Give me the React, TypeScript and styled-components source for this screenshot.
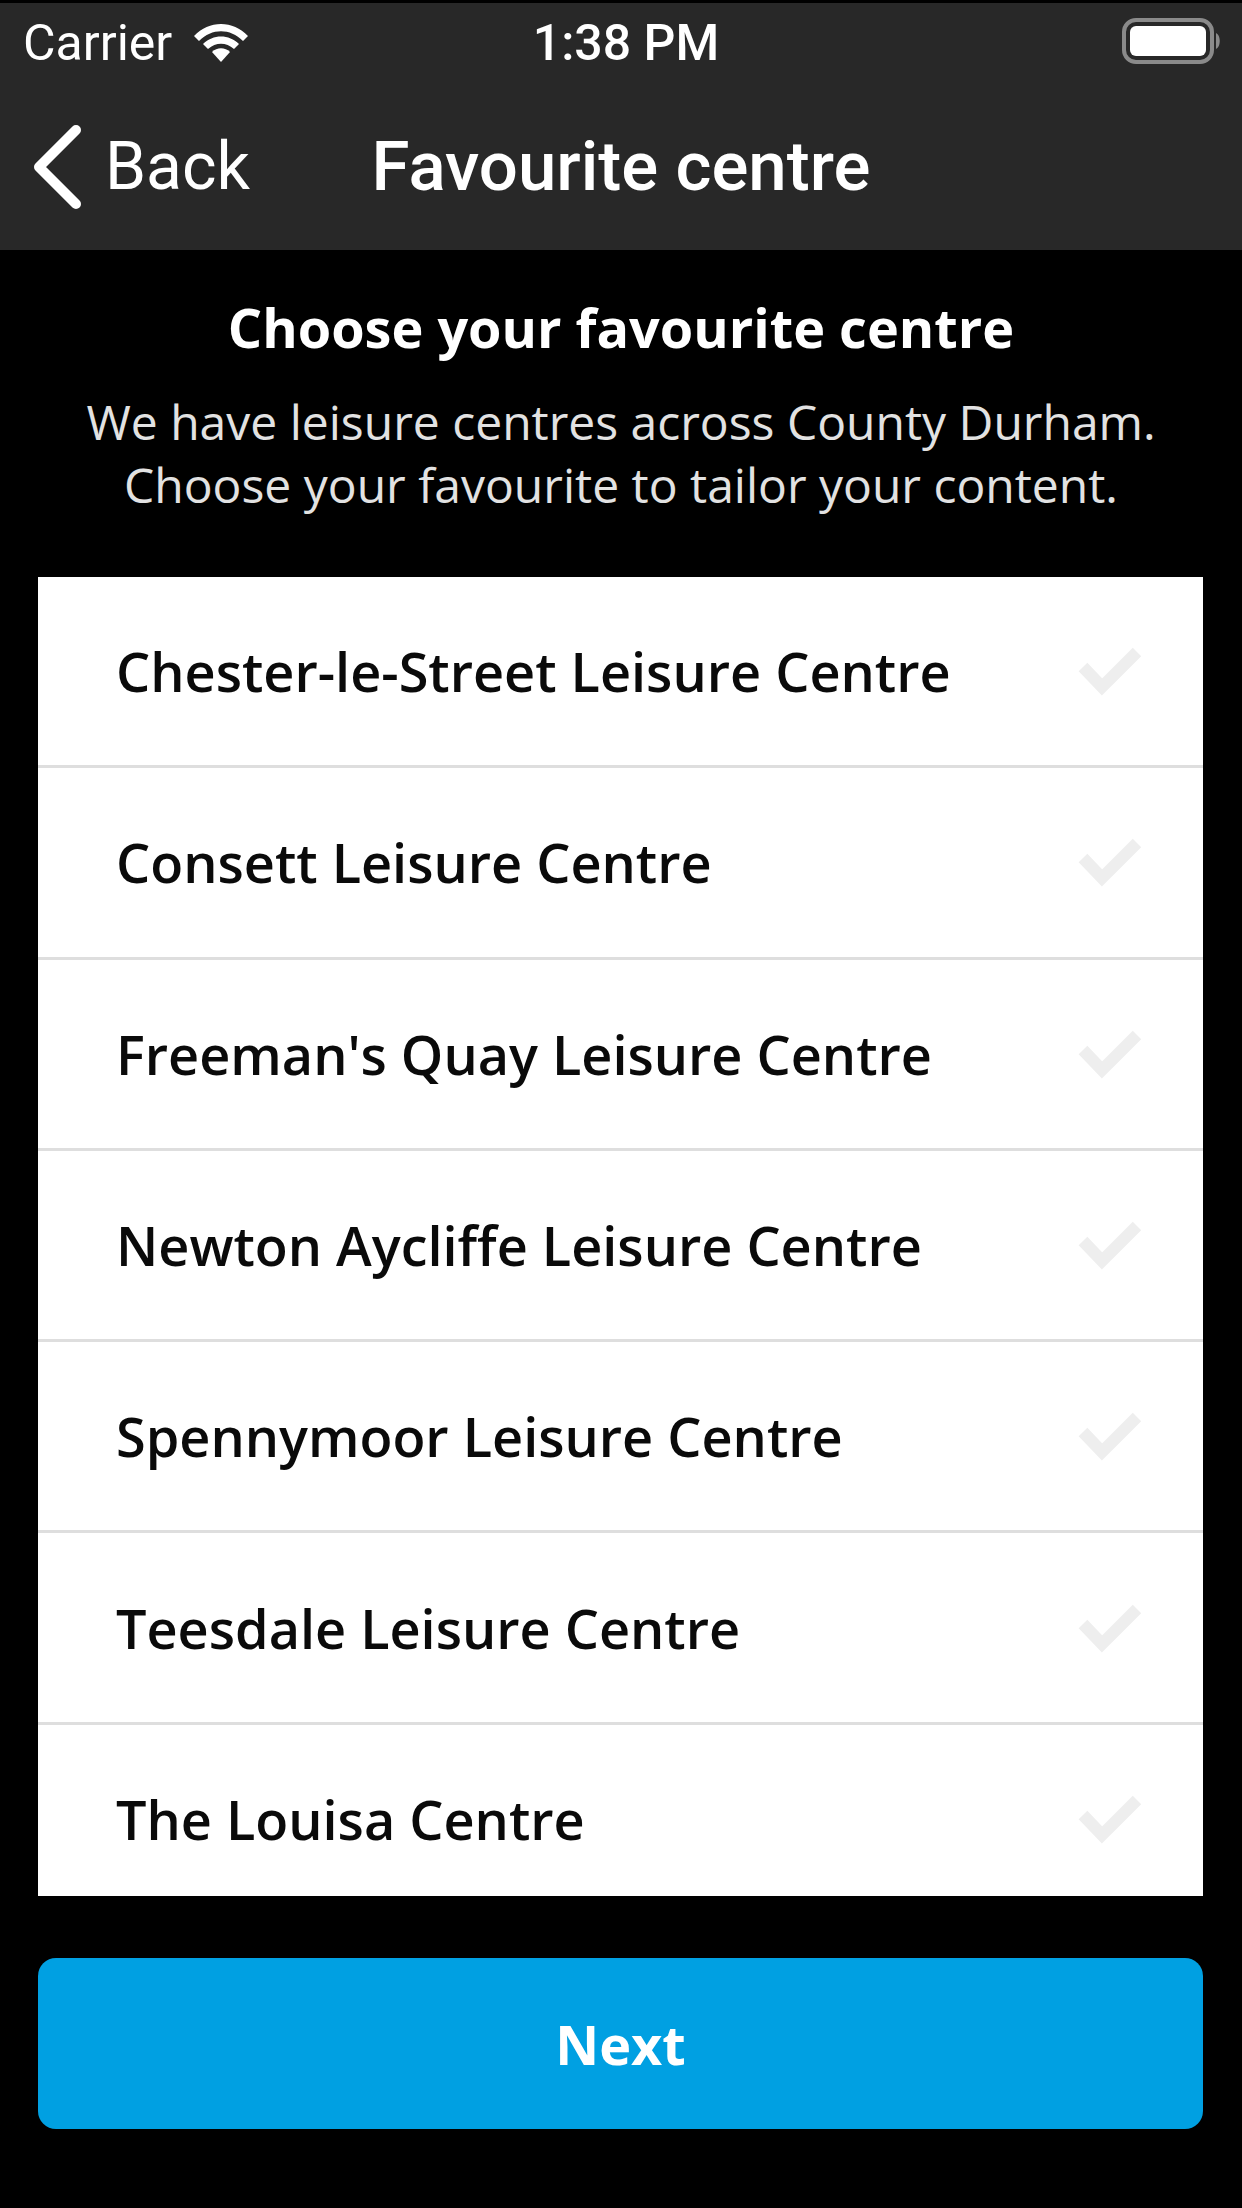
import React from "react";
import styled, { createGlobalStyle } from "styled-components";

const Global = createGlobalStyle`
  html, body { margin: 0; padding: 0; background: #000; }
  * { box-sizing: border-box; }
`;

const Page = styled.div`
  width: 1242px;
  height: 2208px;
  background: #000;
  padding-top: 3px;
  overflow: hidden;
  font-family: "Open Sans", sans-serif;
`;

const Header = styled.header`
  height: 247px;
  background: #282828;
  color: #fff;
  font-family: Roboto, sans-serif;
`;

const StatusBar = styled.div`
  height: 80px;
  padding: 0 20px 0 23px;
  display: grid;
  grid-template-columns: 1fr auto 1fr;
  align-items: center;
`;

const StatusLeft = styled.div`
  display: flex;
  align-items: center;
  gap: 21px;
  font-size: 50px;
`;

const Time = styled.div`
  padding-left: 7px;
  font-size: 50px;
  font-weight: 500;
`;

const StatusRight = styled.div`
  display: flex;
  justify-content: flex-end;
  margin-bottom: 4px;
`;

const NavBar = styled.div`
  height: 167px;
  padding: 0 32px;
  display: grid;
  grid-template-columns: 1fr auto 1fr;
  align-items: center;
`;

const BackLink = styled.div`
  display: flex;
  align-items: center;
  gap: 23px;
  font-size: 66px;
`;

const NavTitle = styled.div`
  font-size: 69px;
  font-weight: 500;
`;

const Intro = styled.section`
  height: 327px;
  padding-top: 44px;
  text-align: center;
`;

const Heading = styled.h1`
  margin: 0;
  font-size: 54px;
  line-height: 66px;
  font-weight: 700;
  color: #fff;
`;

const Lead = styled.p`
  margin: 30px 0 0;
  font-size: 48px;
  line-height: 63px;
  font-weight: 500;
  color: #e2e2e2;
`;

const List = styled.ul`
  list-style: none;
  margin: 0 39px 0 38px;
  padding: 0;
  height: 1319px;
  overflow: hidden;
  background: #fff;
`;

const Row = styled.li`
  height: 191.3px;
  padding: 0 62px 0 78px;
  display: flex;
  align-items: center;
  justify-content: space-between;
  border-bottom: 3px solid #dedede;
  font-size: 54px;
  font-weight: 600;
  color: #0a0a0a;
`;

const Next = styled.button`
  display: block;
  width: 1165px;
  height: 171px;
  margin: 62px 39px 0 38px;
  border: 0;
  border-radius: 18px;
  background: #00a0e2;
  color: #fff;
  font-family: "Open Sans", sans-serif;
  font-size: 54px;
  font-weight: 700;
`;

const Check = () => (
  <svg width="64" height="56" viewBox="0 0 64 56" fill="none">
    <path d="M6 24 L25 44 L60 9" stroke="#eeeeee" strokeWidth="12" />
  </svg>
);

const Wifi = () => (
  <svg width="56" height="40" viewBox="0 0 56 40">
    <path d="M1 13 C16 -3 40 -3 55 13 L50 18 C37 5 19 5 6 18 Z" fill="#fff" />
    <path d="M10 21 C20 11 36 11 46 21 L41 26 C33 19 23 19 15 26 Z" fill="#fff" />
    <path d="M19 29 C24 24 32 24 37 29 L28 39 Z" fill="#fff" />
  </svg>
);

const Battery = () => (
  <svg width="102" height="46" viewBox="0 0 102 46">
    <rect x="4" y="2" width="88" height="42" rx="12" fill="none" stroke="#8a8a8a" strokeWidth="4" />
    <rect x="10" y="8" width="76" height="30" rx="6" fill="#fff" />
    <path d="M96 15 C101 17 101 29 96 31 Z" fill="#8a8a8a" />
  </svg>
);

const Chevron = () => (
  <svg width="50" height="84" viewBox="0 0 50 84" fill="none">
    <path d="M44 5 L7 42 L44 79" stroke="#fff" strokeWidth="10" strokeLinecap="round" strokeLinejoin="round" />
  </svg>
);

const centres = [
  "Chester-le-Street Leisure Centre",
  "Consett Leisure Centre",
  "Freeman's Quay Leisure Centre",
  "Newton Aycliffe Leisure Centre",
  "Spennymoor Leisure Centre",
  "Teesdale Leisure Centre",
  "The Louisa Centre",
];

export default function App() {
  return (
    <Page>
      <Global />
      <Header>
        <StatusBar>
          <StatusLeft>
            <span>Carrier</span>
            <Wifi />
          </StatusLeft>
          <Time>1:38 PM</Time>
          <StatusRight>
            <Battery />
          </StatusRight>
        </StatusBar>
        <NavBar>
          <BackLink>
            <Chevron />
            <span>Back</span>
          </BackLink>
          <NavTitle>Favourite centre</NavTitle>
          <span />
        </NavBar>
      </Header>
      <Intro>
        <Heading>Choose your favourite centre</Heading>
        <Lead>
          We have leisure centres across County Durham.
          <br />
          Choose your favourite to tailor your content.
        </Lead>
      </Intro>
      <List>
        {centres.map((c) => (
          <Row key={c}>
            <span>{c}</span>
            <Check />
          </Row>
        ))}
      </List>
      <Next>Next</Next>
    </Page>
  );
}
